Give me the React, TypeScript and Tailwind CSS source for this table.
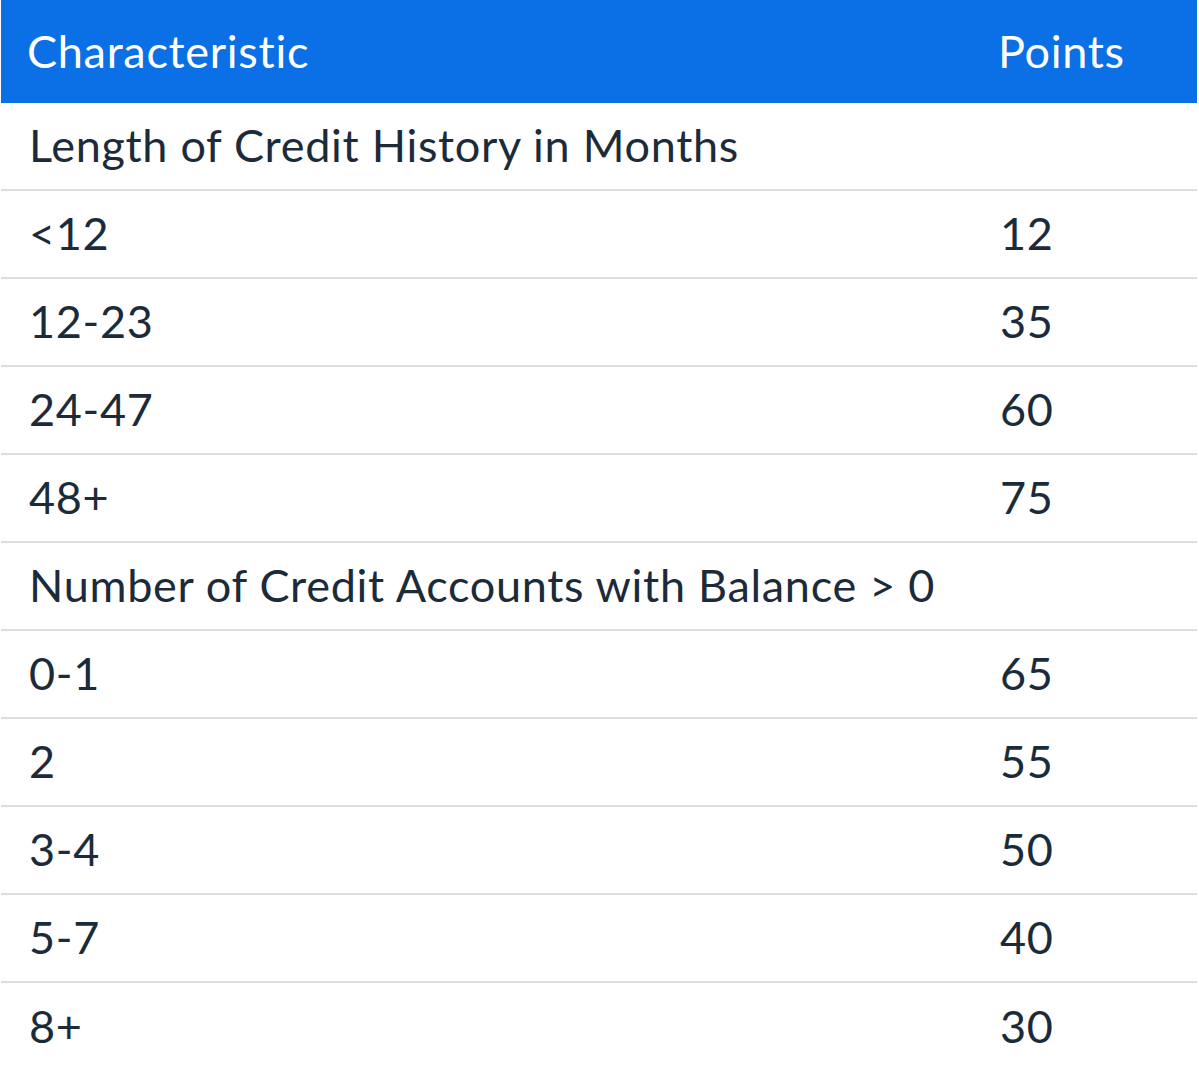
const rows: { label: string; points?: string }[] = [
    { label: 'Length of Credit History in Months' },
    { label: '<12', points: '12' },
    { label: '12-23', points: '35' },
    { label: '24-47', points: '60' },
    { label: '48+', points: '75' },
    { label: 'Number of Credit Accounts with Balance > 0' },
    { label: '0-1', points: '65' },
    { label: '2', points: '55' },
    { label: '3-4', points: '50' },
    { label: '5-7', points: '40' },
    { label: '8+', points: '30' },
];

export default function App() {
    return (
        <div className="min-h-screen bg-white font-['Lato',sans-serif] [font-variant-ligatures:none]">
            <div className="ml-px w-[1196px]">
                <div className="flex h-[103px] items-center bg-[#0b6fe6] text-[45px] tracking-[0.7px] text-white">
                    <div className="w-[971px] pl-[26px]">Characteristic</div>
                    <div className="flex-1 pl-[26px]">Points</div>
                </div>

                {rows.map((row, i) => (
                    <div
                        key={row.label}
                        className={
                            i === rows.length - 1
                                ? 'flex h-[88px] items-center text-[45px] tracking-[0.7px] text-[#1c2b39]'
                                : 'flex h-[88px] items-center border-b-2 border-[#dedede] text-[45px] tracking-[0.7px] text-[#1c2b39]'
                        }
                    >
                        <div className="w-[971px] pl-[28px]">{row.label}</div>
                        <div className="flex-1 pl-[28px]">{row.points}</div>
                    </div>
                ))}
            </div>
        </div>
    );
}
